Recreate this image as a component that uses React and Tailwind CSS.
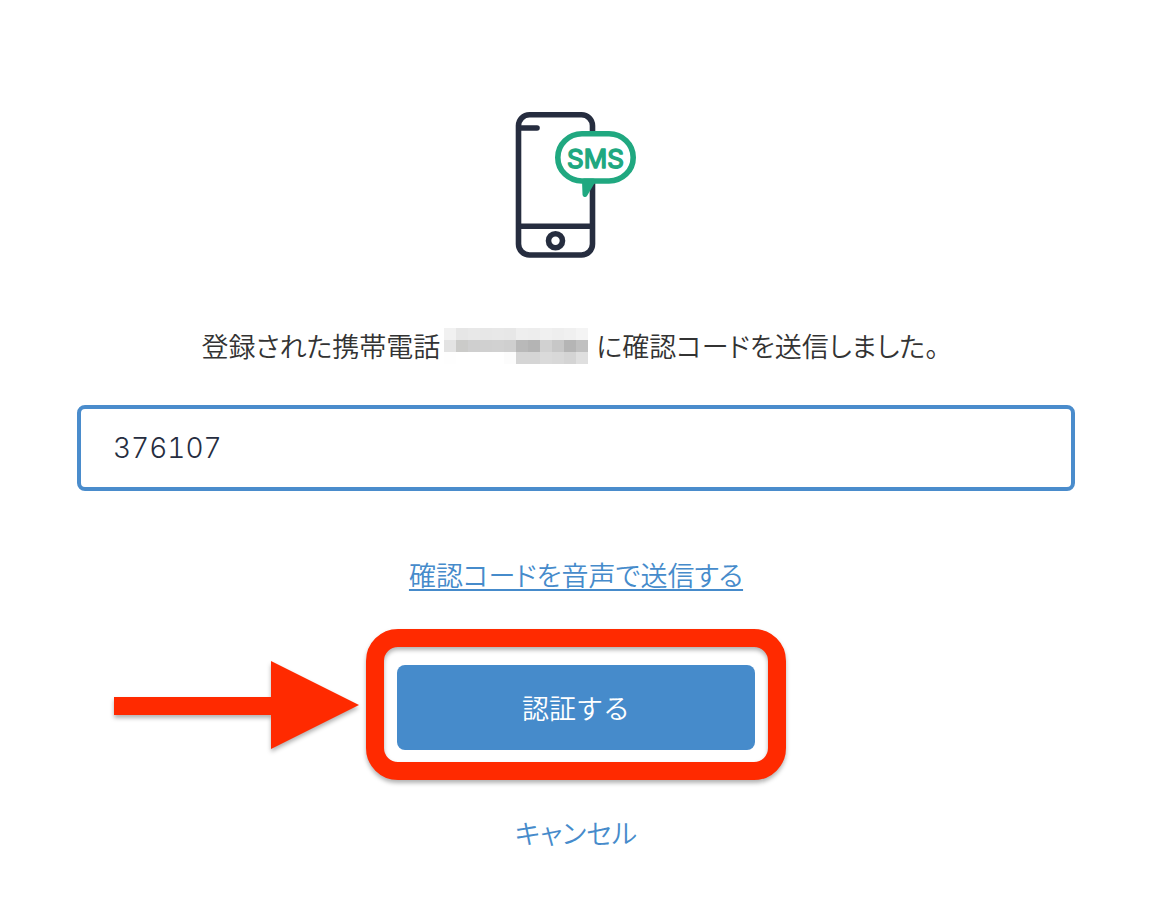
import { useState } from "react";

const maskedNumber = [
  ["#f1f1f1", "#e6e6e6", "#e8e8e8", "#e7e7e7", "#e8e8e8", "#e7e7e7", "#eeeeee", "#ededed", "#f0f0f0", "#eeeeee", "#f0f0f0", "#f4f4f4"],
  ["#e3e3e3", "#cbcbc9", "#cfcfcf", "#d0d0d0", "#d1d1d1", "#cfcfcf", "#b9b9b9", "#b4b4b4", "#d1d1d1", "#c7c7c7", "#b5b5b5", "#c0c0c0"],
  ["#fefefe", "#ffffff", "#ffffff", "#ffffff", "#ffffff", "#fcfcfc", "#d5d5d5", "#d5d5d5", "#dadada", "#d8d8d8", "#d4d4d4", "#dfdfdf"],
];

function PhoneSmsIcon() {
  return (
    <svg width="122" height="146" viewBox="0 0 122 146" fill="none" aria-hidden="true">
      <g stroke="#262d3f" strokeWidth="5.6" strokeLinecap="round">
        <rect x="3.5" y="2.8" width="74" height="140.2" rx="11" />
        <path d="M4 16H22" />
        <path d="M4 114.3H77" />
        <circle cx="40.5" cy="128.7" r="7" />
      </g>
      <path
        d="M67 21.8H94A24.2 23.6 0 0 1 94 69H67A24.2 23.6 0 0 1 67 21.8Z"
        fill="white"
        stroke="#20a880"
        strokeWidth="5.6"
      />
      <path d="M69.5 69H78L70 82.5Z" fill="#20a880" stroke="#20a880" strokeWidth="5" strokeLinejoin="round" />
      <path d="M75.8 67.6L77.8 70.6L79.8 67.6Z" fill="#20a880" />
      <text
        x="80.5"
        y="55.5"
        textAnchor="middle"
        fill="#20a880"
        stroke="#20a880"
        strokeWidth="1.5"
        strokeLinejoin="round"
        className="font-['Inter',sans-serif] text-[26px] font-normal"
      >
        SMS
      </text>
    </svg>
  );
}

function MaskedNumber() {
  return (
    <span className="mx-1 grid shrink-0 grid-cols-12" role="img" aria-label="電話番号">
      {maskedNumber.flat().map((color, i) => (
        <span key={i} className="size-3" style={{ backgroundColor: color }} />
      ))}
    </span>
  );
}

function Arrow() {
  return (
    <svg
      className="pointer-events-none absolute -top-1 right-full mr-[38px] drop-shadow-[0_3px_2px_rgba(0,0,0,0.3)]"
      width="245"
      height="88"
      viewBox="0 0 245 88"
      aria-hidden="true"
    >
      <path d="M0 36H157V0L245 44L157 88V54H0Z" fill="#ff2a00" />
    </svg>
  );
}

export default function App() {
  const [code, setCode] = useState("376107");

  return (
    <main className="min-h-screen bg-white pt-28 pr-[78px] pb-12 pl-[77px] font-['Noto_Sans_CJK_JP',sans-serif] text-[27px] leading-10 font-[350] text-[#333] [font-feature-settings:'palt']">
      <form className="flex flex-col items-center" onSubmit={(e) => e.preventDefault()}>
        <PhoneSmsIcon />

        <label htmlFor="code" className="mt-[68px] flex items-center justify-center pr-3">
          <span>登録された携帯電話</span>
          <MaskedNumber />
          <span className="pl-1">に確認コードを送信しました。</span>
        </label>

        <input
          id="code"
          type="text"
          inputMode="numeric"
          value={code}
          onChange={(e) => setCode(e.target.value)}
          className="mt-[39px] h-[86px] w-full rounded-lg border-4 border-[#4a8ccc] bg-white px-8 font-['Inter',sans-serif] text-[28px] font-light tabular-nums text-[#262d3f] outline-none"
        />

        <a href="#voice" className="mt-16 text-[#468bcb] underline decoration-2 underline-offset-3">
          確認コードを音声で送信する
        </a>

        <div className="relative mt-[70px]">
          <button
            type="submit"
            className="block h-[85px] w-[358px] rounded-lg bg-[#468bcb] text-white [font-feature-settings:normal]"
          >
            認証する
          </button>
          <div className="pointer-events-none absolute -inset-x-[31px] -top-9 -bottom-[30px] rounded-[32px] border-18 border-[#ff2a00] drop-shadow-[0_3px_2px_rgba(0,0,0,0.3)]" />
          <Arrow />
        </div>

        <button type="button" className="mt-[63px] text-[#468bcb]">
          キャンセル
        </button>
      </form>
    </main>
  );
}
